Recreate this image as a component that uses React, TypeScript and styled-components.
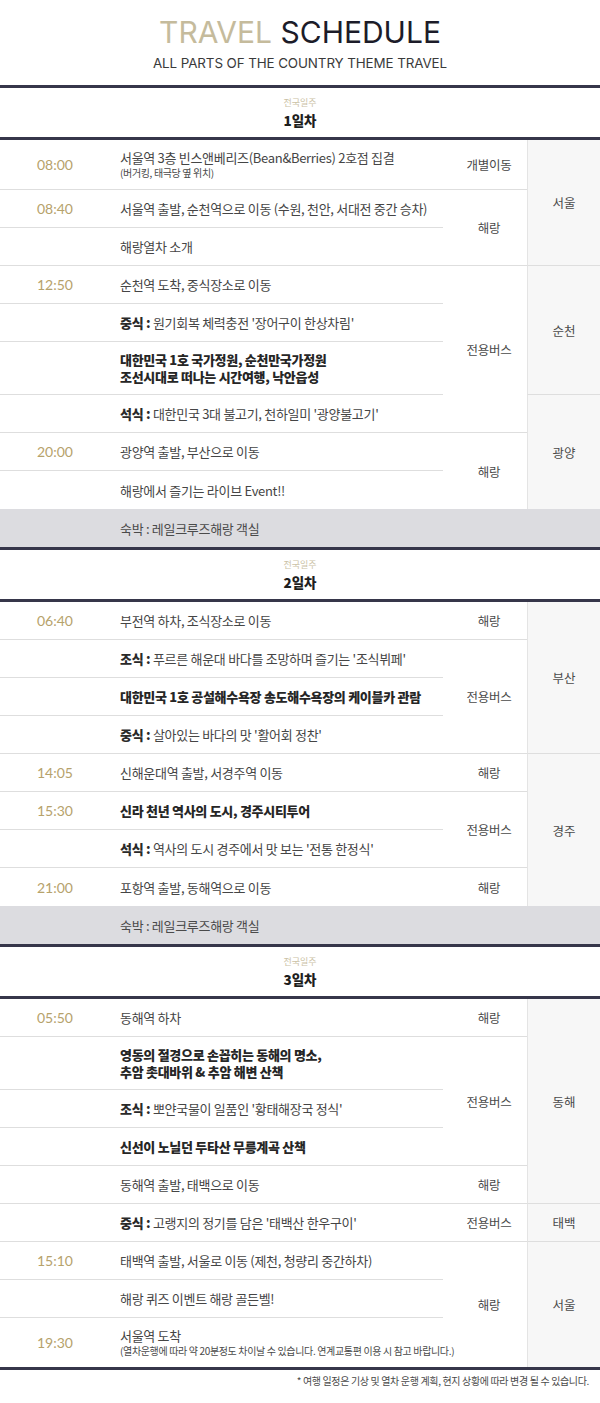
import React from 'react';
import styled, { createGlobalStyle } from 'styled-components';

const GlobalStyle = createGlobalStyle`
  html, body { margin: 0; padding: 0; background: #fff; }
  body {
    font-family: "Noto Sans CJK KR", "Noto Sans", sans-serif;
    color: #454545;
  }
  * { box-sizing: border-box; }
`;

type Act = {
  time?: string;
  label?: string;
  text?: string;
  sub?: string;
  bold?: string[];
};
type Span = { name: string; span: number };
type Day = { n: number; acts: Act[]; transport: Span[]; region: Span[]; stay?: string };

const days: Day[] = [
  {
    n: 1,
    acts: [
      { time: '08:00', text: '서울역 3층 빈스앤베리즈(Bean&Berries) 2호점 집결', sub: '(버거킹, 태극당 옆 위치)' },
      { time: '08:40', text: '서울역 출발, 순천역으로 이동 (수원, 천안, 서대전 중간 승차)' },
      { text: '해랑열차 소개' },
      { time: '12:50', text: '순천역 도착, 중식장소로 이동' },
      { label: '중식', text: "원기회복 체력충전 '장어구이 한상차림'" },
      { bold: ['대한민국 1호 국가정원, 순천만국가정원', '조선시대로 떠나는 시간여행, 낙안읍성'] },
      { label: '석식', text: "대한민국 3대 불고기, 천하일미 '광양불고기'" },
      { time: '20:00', text: '광양역 출발, 부산으로 이동' },
      { text: '해랑에서 즐기는 라이브 Event!!' },
    ],
    transport: [
      { name: '개별이동', span: 1 },
      { name: '해랑', span: 2 },
      { name: '전용버스', span: 4 },
      { name: '해랑', span: 2 },
    ],
    region: [
      { name: '서울', span: 3 },
      { name: '순천', span: 3 },
      { name: '광양', span: 3 },
    ],
    stay: '숙박 : 레일크루즈해랑 객실',
  },
  {
    n: 2,
    acts: [
      { time: '06:40', text: '부전역 하차, 조식장소로 이동' },
      { label: '조식', text: "푸르른 해운대 바다를 조망하며 즐기는 '조식뷔페'" },
      { bold: ['대한민국 1호 공설해수욕장 송도해수욕장의 케이블카 관람'] },
      { label: '중식', text: "살아있는 바다의 맛 '활어회 정찬'" },
      { time: '14:05', text: '신해운대역 출발, 서경주역 이동' },
      { time: '15:30', bold: ['신라 천년 역사의 도시, 경주시티투어'] },
      { label: '석식', text: "역사의 도시 경주에서 맛 보는 '전통 한정식'" },
      { time: '21:00', text: '포항역 출발, 동해역으로 이동' },
    ],
    transport: [
      { name: '해랑', span: 1 },
      { name: '전용버스', span: 3 },
      { name: '해랑', span: 1 },
      { name: '전용버스', span: 2 },
      { name: '해랑', span: 1 },
    ],
    region: [
      { name: '부산', span: 4 },
      { name: '경주', span: 4 },
    ],
    stay: '숙박 : 레일크루즈해랑 객실',
  },
  {
    n: 3,
    acts: [
      { time: '05:50', text: '동해역 하차' },
      { bold: ['영동의 절경으로 손꼽히는 동해의 명소,', '추암 촛대바위 & 추암 해변 산책'] },
      { label: '조식', text: "뽀얀국물이 일품인 '황태해장국 정식'" },
      { bold: ['신선이 노닐던 두타산 무릉계곡 산책'] },
      { text: '동해역 출발, 태백으로 이동' },
      { label: '중식', text: "고랭지의 정기를 담은 '태백산 한우구이'" },
      { time: '15:10', text: '태백역 출발, 서울로 이동 (제천, 청량리 중간하차)' },
      { text: '해랑 퀴즈 이벤트 해랑 골든벨!' },
      {
        time: '19:30',
        text: '서울역 도착',
        sub: '(열차운행에 따라 약 20분정도 차이날 수 있습니다. 연계교통편 이용 시 참고 바랍니다.)',
      },
    ],
    transport: [
      { name: '해랑', span: 1 },
      { name: '전용버스', span: 3 },
      { name: '해랑', span: 1 },
      { name: '전용버스', span: 1 },
      { name: '해랑', span: 3 },
    ],
    region: [
      { name: '동해', span: 5 },
      { name: '태백', span: 1 },
      { name: '서울', span: 3 },
    ],
  },
];

const Page = styled.div`
  width: 600px;
  height: 1403px;
  background: #fff;
  overflow: hidden;
`;

const Header = styled.header`
  padding: 12px 0 11px;
  text-align: center;
`;

const Title = styled.h1`
  margin: 0;
  font-family: Inter, "Noto Sans", sans-serif;
  font-weight: 400;
  font-size: 30px;
  line-height: 40px;
  letter-spacing: 0px;
  color: #1c1c29;
`;

const TitleAccent = styled.span`
  color: #c5bb9c;
`;

const Subtitle = styled.p`
  margin: 1px 0 0;
  font-family: Inter, "Noto Sans", sans-serif;
  font-size: 13.4px;
  line-height: 21px;
  letter-spacing: -0.1px;
  color: #3a3a3a;
`;

const DayHeader = styled.div`
  border-top: 3px solid #36364a;
  border-bottom: 3px solid #36364a;
  padding: 8px 0 7px;
  text-align: center;
`;

const DayTag = styled.div`
  font-size: 9px;
  line-height: 14px;
  color: #cbc2a6;
`;

const DayTitle = styled.div`
  font-size: 13.5px;
  line-height: 20px;
  font-weight: 800;
  color: #1e1e1e;
`;

const Grid = styled.div`
  display: grid;
  grid-template-columns: 110px 333px 84px 73px;
  grid-auto-rows: minmax(38px, auto);
`;

const TimeCell = styled.div<{ $row: number; $line: boolean }>`
  grid-column: 1;
  grid-row: ${(p) => p.$row};
  display: flex;
  align-items: center;
  justify-content: center;
  font-family: Lato, "Noto Sans", sans-serif;
  font-size: 14px;
  color: #b6a26b;
  border-bottom: ${(p) => (p.$line ? '1px solid #dedede' : 'none')};
`;

const DescCell = styled.div<{ $row: number; $line: boolean }>`
  grid-column: 2;
  grid-row: ${(p) => p.$row};
  display: flex;
  flex-direction: column;
  justify-content: center;
  padding: 9px 10px;
  border-bottom: ${(p) => (p.$line ? '1px solid #dedede' : 'none')};
`;

const MainText = styled.div`
  font-size: 13px;
  line-height: 17px;
  letter-spacing: -0.3px;
  color: #454545;
  white-space: nowrap;
`;

const Label = styled.b`
  font-weight: 800;
  color: #2a2a2a;
`;

const BoldText = styled.div`
  font-size: 13px;
  line-height: 17px;
  font-weight: 800;
  letter-spacing: -0.3px;
  color: #262626;
  white-space: nowrap;
`;

const SubText = styled.div`
  font-size: 10px;
  line-height: 14px;
  letter-spacing: -0.35px;
  color: #4a4a4a;
  white-space: nowrap;
`;

const TransportCell = styled.div<{ $row: number; $span: number; $line: boolean }>`
  grid-column: 3;
  grid-row: ${(p) => p.$row} / span ${(p) => p.$span};
  display: flex;
  align-items: center;
  justify-content: center;
  padding-left: 8px;
  font-size: 12.5px;
  letter-spacing: -0.2px;
  color: #4a4a4a;
  border-bottom: ${(p) => (p.$line ? '1px solid #dedede' : 'none')};
`;

const RegionCell = styled.div<{ $row: number; $span: number; $line: boolean }>`
  grid-column: 4;
  grid-row: ${(p) => p.$row} / span ${(p) => p.$span};
  display: flex;
  align-items: center;
  justify-content: center;
  background: #f7f7f7;
  border-left: 1px solid #e4e4e4;
  font-size: 12.5px;
  color: #4a4a4a;
  border-bottom: ${(p) => (p.$line ? '1px solid #dedede' : 'none')};
`;

const StayRow = styled.div`
  height: 38px;
  display: flex;
  align-items: center;
  padding-left: 120px;
  background: #dcdce0;
  font-size: 13px;
  letter-spacing: -0.3px;
  color: #4a4a4a;
`;

const EndLine = styled.div`
  border-top: 3px solid #36364a;
`;

const Footnote = styled.p`
  margin: 4px 0 0;
  padding-right: 11px;
  text-align: right;
  font-size: 10px;
  line-height: 14px;
  letter-spacing: -0.35px;
  color: #4a4a4a;
`;

function spans(list: Span[]) {
  let row = 1;
  return list.map((s, i) => {
    const r = { ...s, row: row, last: i === list.length - 1 };
    row += s.span;
    return r;
  });
}

function DayBlock({ day }: { day: Day }) {
  const n = day.acts.length;
  return (
    <section>
      <DayHeader>
        <DayTag>전국일주</DayTag>
        <DayTitle>{day.n}일차</DayTitle>
      </DayHeader>
      <Grid>
        {day.acts.map((a, i) => {
          const line = i < n - 1;
          return (
            <React.Fragment key={i}>
              <TimeCell $row={i + 1} $line={line}>
                {a.time}
              </TimeCell>
              <DescCell $row={i + 1} $line={line}>
                {a.bold ? (
                  a.bold.map((b) => <BoldText key={b}>{b}</BoldText>)
                ) : (
                  <MainText>
                    {a.label && <Label>{a.label} : </Label>}
                    {a.text}
                  </MainText>
                )}
                {a.sub && <SubText>{a.sub}</SubText>}
              </DescCell>
            </React.Fragment>
          );
        })}
        {spans(day.transport).map((t, i) => (
          <TransportCell key={'t' + i} $row={t.row} $span={t.span} $line={!t.last}>
            {t.name}
          </TransportCell>
        ))}
        {spans(day.region).map((r, i) => (
          <RegionCell key={'r' + i} $row={r.row} $span={r.span} $line={!r.last}>
            {r.name}
          </RegionCell>
        ))}
      </Grid>
      {day.stay && <StayRow>{day.stay}</StayRow>}
    </section>
  );
}

export default function App() {
  return (
    <Page>
      <GlobalStyle />
      <Header>
        <Title>
          <TitleAccent>TRAVEL</TitleAccent> SCHEDULE
        </Title>
        <Subtitle>ALL PARTS OF THE COUNTRY THEME TRAVEL</Subtitle>
      </Header>
      {days.map((d) => (
        <DayBlock key={d.n} day={d} />
      ))}
      <EndLine />
      <Footnote>* 여행 일정은 기상 및 열차 운행 계획, 현지 상황에 따라 변경 될 수 있습니다.</Footnote>
    </Page>
  );
}
